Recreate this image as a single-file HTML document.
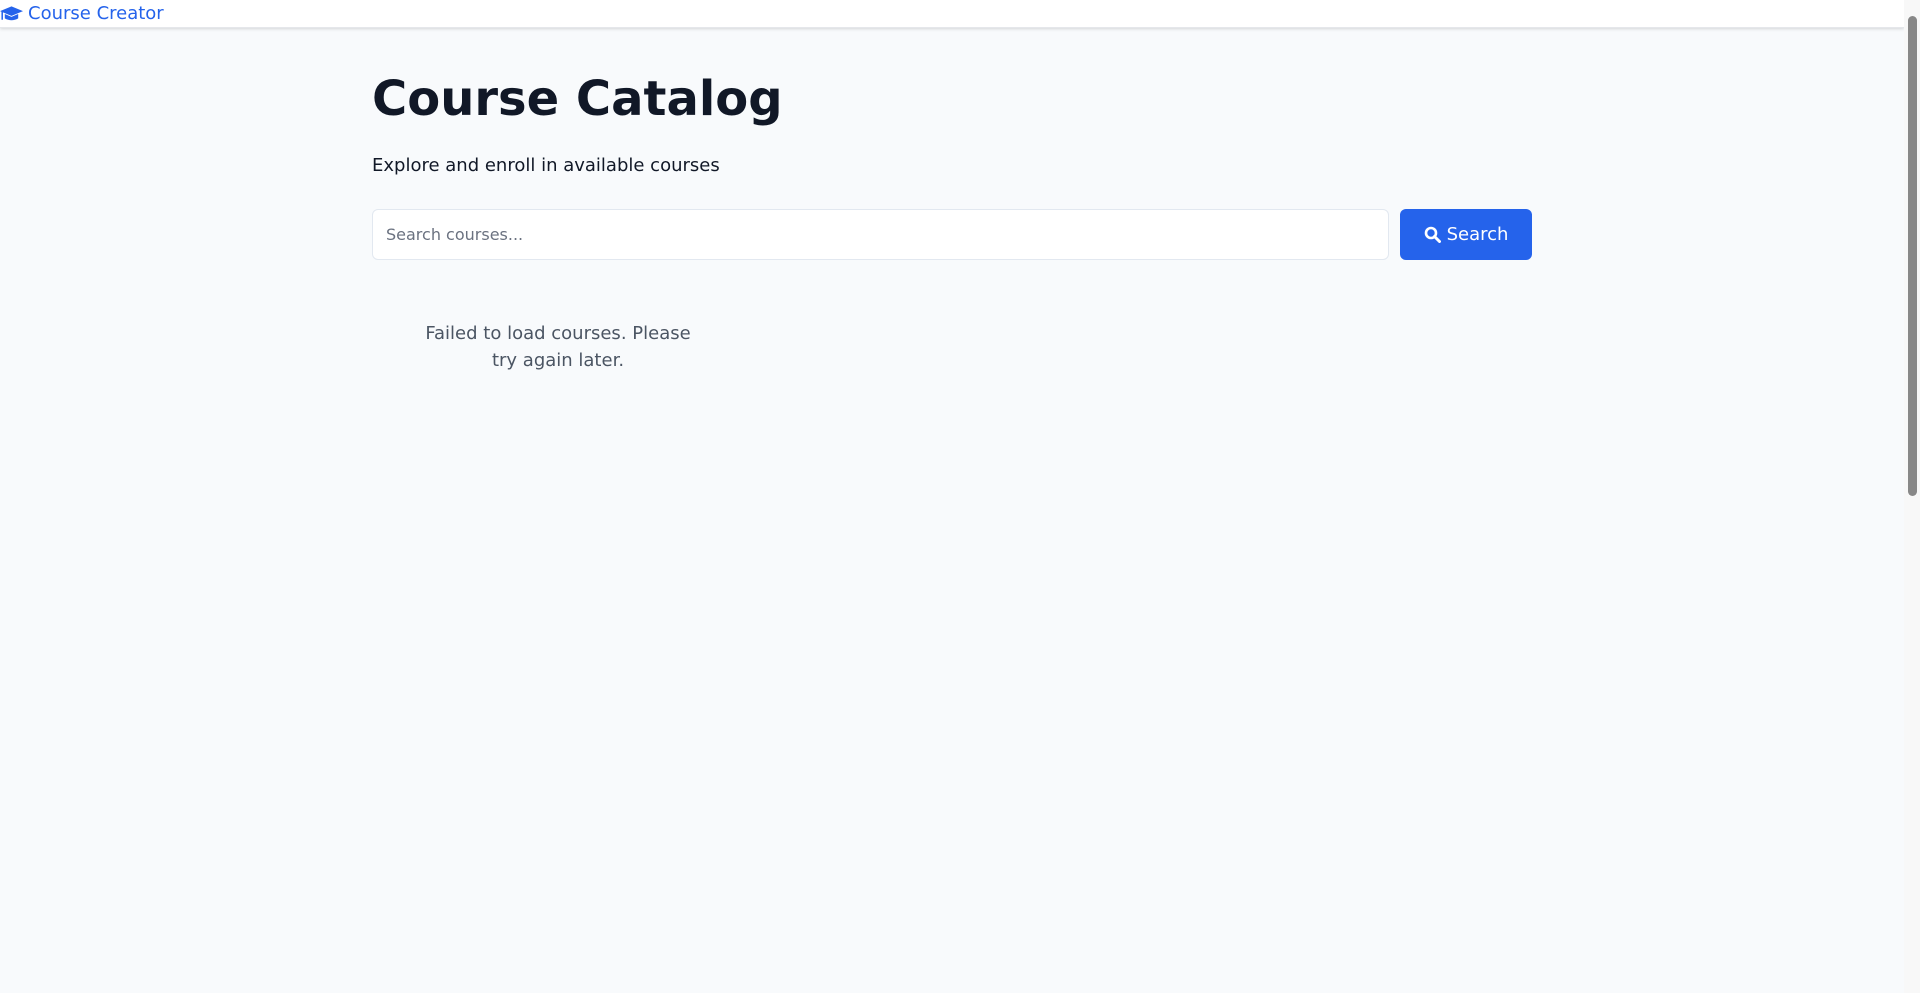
<!DOCTYPE html>
<html><head><meta charset="utf-8"><style>
html,body{margin:0;padding:0;overflow:hidden;}
body{width:1920px;height:993px;background:#f8fafc;font-family:"DejaVu Sans","Liberation Sans",sans-serif;position:relative;}
.nav{position:absolute;left:0;top:0;width:1904px;height:28px;background:#fff;box-shadow:0 1px 3px rgba(0,0,0,.15);border-bottom:1px solid #e5e7eb;box-sizing:border-box;}
.brand{position:absolute;left:0;top:3px;color:#2563eb;font-size:18px;line-height:22px;display:flex;align-items:center;}
.brand svg{margin-right:5px}
h1{position:absolute;left:372px;top:66px;margin:0;font-size:48px;line-height:66px;font-weight:bold;color:#111827;}
.sub{position:absolute;left:372px;top:154px;font-size:18px;line-height:24px;color:#111827;}
.inp{position:absolute;left:372px;top:209px;width:1017px;height:51px;box-sizing:border-box;background:#fff;border:1px solid #e2e8f0;border-radius:6px;font-size:16px;color:#6b7280;padding-left:13px;line-height:49px;}
.btn{position:absolute;left:1400px;top:209px;width:132px;height:51px;background:#2563eb;border-radius:6px;color:#fff;font-size:18px;display:flex;align-items:center;justify-content:center;}
.btn svg{margin-right:6px}
.err{position:absolute;left:373px;top:320px;width:370px;box-sizing:border-box;padding:0 48px;text-align:center;font-size:18px;line-height:27px;color:#4b5563;}
.sb{position:absolute;right:0;top:0;width:16px;height:993px;background:#f8f8f8;}
.th{position:absolute;right:3px;top:16px;width:9px;height:480px;background:#888;border-radius:5px;}
</style></head><body>
<div class="nav"><div class="brand"><svg width="23" height="18" viewBox="0 0 24 18"><path d="M12 1 L24 6 L12 11 L0 6 Z" fill="#2563eb"/><path d="M5 9 L5 13.5 Q12 17.5 19 13.5 L19 9 L12 12 Z" fill="#2563eb"/><rect x="1.5" y="6" width="1.6" height="9" fill="#2563eb"/></svg>Course Creator</div></div>
<h1>Course Catalog</h1>
<div class="sub">Explore and enroll in available courses</div>
<div class="inp">Search courses...</div>
<div class="btn"><svg width="17" height="17" viewBox="0 0 17 17"><circle cx="7" cy="7" r="5" fill="none" stroke="#fff" stroke-width="2.6"/><path d="M10.5 10.5 L15.5 15.5" stroke="#fff" stroke-width="3" stroke-linecap="round"/></svg>Search</div>
<div class="err">Failed to load courses. Please try again later.</div>
<div class="sb"><div class="th"></div></div>
</body></html>
